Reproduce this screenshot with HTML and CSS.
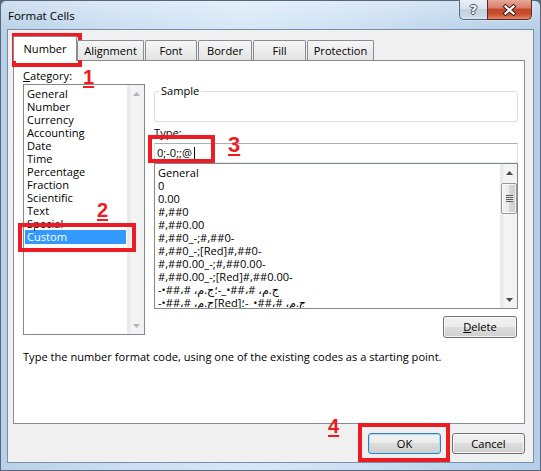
FILE: index.html
```html
<!DOCTYPE html>
<html lang="en">
<head>
<meta charset="utf-8">
<title>Format Cells</title>
<link rel="stylesheet" href="styles.css">
</head>
<body>
<div class="window">
  <div class="titlebar">
    <span class="title">Format Cells</span>
    <div class="caption">
      <div class="cbtn help"><span class="help-glyph">?</span></div>
      <div class="cbtn close">
        <svg width="15" height="12" viewBox="0 0 15 12">
          <path d="M3.5 2.5 L11.5 9.5 M11.5 2.5 L3.5 9.5" stroke="#45201a" stroke-width="4.2" stroke-linecap="square" fill="none"/>
          <path d="M3.5 2.5 L11.5 9.5 M11.5 2.5 L3.5 9.5" stroke="#ffffff" stroke-width="2.2" stroke-linecap="square" fill="none"/>
        </svg>
      </div>
    </div>
  </div>
  <div class="client">
    <div class="tabs">
      <div class="tab active">Number</div>
      <div class="tab">Alignment</div>
      <div class="tab">Font</div>
      <div class="tab">Border</div>
      <div class="tab">Fill</div>
      <div class="tab">Protection</div>
    </div>
    <div class="panel">
      <div class="cols">
        <div class="col-left">
          <div class="label"><u>C</u>ategory:</div>
          <div class="listbox cat">
            <ul class="items">
              <li>General</li>
              <li>Number</li>
              <li>Currency</li>
              <li>Accounting</li>
              <li>Date</li>
              <li>Time</li>
              <li>Percentage</li>
              <li>Fraction</li>
              <li>Scientific</li>
              <li>Text</li>
              <li>Special</li>
              <li class="sel">Custom</li>
            </ul>
            <div class="vscroll disabled">
              <div class="sb-btn"><svg width="7" height="4" viewBox="0 0 7 4"><path d="M0 4 L3.5 0 L7 4 Z"/></svg></div>
              <div class="sb-track"></div>
              <div class="sb-btn"><svg width="7" height="4" viewBox="0 0 7 4"><path d="M0 0 L7 0 L3.5 4 Z"/></svg></div>
            </div>
          </div>
        </div>
        <div class="col-right">
          <fieldset class="sample"><legend>Sample</legend></fieldset>
          <div class="label"><u>T</u>ype:</div>
          <div class="textbox">0;-0;;@<span class="caret"></span></div>
          <div class="listbox fmt">
            <ul class="items">
              <li>General</li>
              <li>0</li>
              <li>0.00</li>
              <li>#,##0</li>
              <li>#,##0.00</li>
              <li>#,##0_-;#,##0-</li>
              <li>#,##0_-;[Red]#,##0-</li>
              <li>#,##0.00_-;#,##0.00-</li>
              <li>#,##0.00_-;[Red]#,##0.00-</li>
              <li><bdo dir="ltr">-•##،# ،م.ج؛-_•##،# ،م.ج</bdo></li>
              <li><bdo dir="ltr">-•##،# ،م.ج[Red]؛-_•##،# ،م.ج</bdo></li>
            </ul>
            <div class="vscroll">
              <div class="sb-btn"><svg width="7" height="4" viewBox="0 0 7 4"><path d="M0 4 L3.5 0 L7 4 Z"/></svg></div>
              <div class="sb-track"><div class="thumb"><span class="grip"></span></div></div>
              <div class="sb-btn"><svg width="7" height="4" viewBox="0 0 7 4"><path d="M0 0 L7 0 L3.5 4 Z"/></svg></div>
            </div>
          </div>
          <div class="btn-row"><button class="btn delete"><u>D</u>elete</button></div>
        </div>
      </div>
      <p class="desc">Type the number format code, using one of the existing codes as a starting point.</p>
    </div>
    <div class="footer">
      <button class="btn default">OK</button>
      <button class="btn">Cancel</button>
    </div>
  </div>

  <div class="mark box1"></div>
  <div class="mark box2"></div>
  <div class="mark box3"></div>
  <div class="mark box4"></div>
  <span class="num n1">1</span>
  <span class="num n2">2</span>
  <span class="num n3">3</span>
  <span class="num n4">4</span>
</div>
</body>
</html>
```
FILE: styles.css
```css
* { box-sizing: border-box; }
html, body { margin: 0; padding: 0; }
html { background: #56677c; }
body {
  width: 541px;
  height: 471px;
  overflow: hidden;
  font-family: "Open Sans", "Noto Sans", "DejaVu Sans", sans-serif;
  font-size: 11.1px;
  color: #000;
}

.window {
  position: relative;
  width: 541px;
  height: 471px;
  border: 1px solid #56677c;
  border-radius: 6px 6px 0 0;
  padding: 0 6px 7px;
  display: flex;
  flex-direction: column;
  background:
    linear-gradient(to bottom, rgba(255,255,255,0.35), rgba(255,255,255,0) 30px),
    linear-gradient(to right, #b9d0e8 0%, #c9ddf1 20%, #d6e7f7 45%, #cde0f3 65%, #bcd3eb 85%, #b6cee8 100%);
}

/* title bar */
.titlebar {
  height: 28px;
  display: flex;
  align-items: flex-start;
  justify-content: space-between;
}
.title {
  margin: 7px 0 0 1px;
  font-size: 11.5px;
  line-height: 16px;
  color: #000;
}
.caption {
  display: flex;
  margin: -1px 2px 0 0;
  box-shadow: 0 0 2px rgba(255,255,255,0.8);
  border-radius: 0 0 5px 5px;
}
.cbtn {
  height: 20px;
  display: flex;
  align-items: center;
  justify-content: center;
  border: 1px solid #55667c;
  border-top: none;
}
.cbtn.help {
  width: 28px;
  border-right: none;
  border-radius: 0 0 0 5px;
  background: linear-gradient(to bottom, #e9eff6 0%, #d9e3ee 45%, #c2d1e1 50%, #cad8e7 85%, #dbe6f1 100%);
}
.help-glyph {
  font-family: "DejaVu Sans", sans-serif;
  font-weight: bold;
  font-size: 13px;
  line-height: 16px;
  color: #fff;
  text-shadow: 1px 0 0 #3d4d61, -1px 0 0 #3d4d61, 0 1px 0 #3d4d61, 0 -1px 0 #3d4d61;
}
.cbtn.close {
  width: 45px;
  border-color: #5a2a22;
  border-radius: 0 0 5px 0;
  background: linear-gradient(to bottom, #e8a797 0%, #d97f6b 40%, #c4462f 50%, #c8502f 75%, #e2876a 100%);
}
.cbtn.close svg { display: block; }

/* client area */
.client {
  flex: 1;
  background: #f0f0f0;
  border: 1px solid #7a8ea8;
  padding: 6px 8px 8px 5px;
  display: flex;
  flex-direction: column;
}

/* tabs */
.tabs {
  height: 24px;
  display: flex;
  align-items: flex-end;
  position: relative;
  z-index: 1;
}
.tab {
  height: 20px;
  line-height: 19px;
  text-align: center;
  border: 1px solid #898c95;
  border-bottom: none;
  border-radius: 2px 2px 0 0;
  background: linear-gradient(to bottom, #f6f6f6, #e4e4e4);
  margin-left: 1px;
}
.tab.active {
  height: 25px;
  line-height: 22px;
  padding-top: 1px;
  margin: 0 0 -1px 0;
  width: 64px;
  background: #fff;
}
.tab:nth-child(2) { width: 67px; margin-left: 0; }
.tab:nth-child(3) { width: 52px; margin-left: 1px; }
.tab:nth-child(4) { width: 54px; margin-left: 1px; }
.tab:nth-child(5) { width: 53px; margin-left: 1px; }
.tab:nth-child(6) { width: 67px; margin-left: 1px; }

/* panel */
.panel {
  height: 364px;
  width: 512px;
  border: 1px solid #898c95;
  background: #fff;
  padding: 7px 6px 0 9px;
}
.cols {
  display: flex;
  gap: 9px;
  align-items: flex-start;
}
.col-left { width: 122px; }
.col-right {
  width: 364px;
  display: flex;
  flex-direction: column;
  margin-top: 16px;
}
.label {
  line-height: 16px;
  height: 16px;
}
u { text-decoration: underline; text-underline-offset: 1px; }

/* list boxes */
.listbox {
  display: flex;
  border: 1px solid #828790;
  background: #fff;
}
.listbox.cat { height: 251px; }
.listbox.fmt { height: 146px; }
.items {
  list-style: none;
  margin: 0;
  padding: 2px 0 0 0;
  flex: 1;
  overflow: hidden;
}
.items li {
  line-height: 13px;
  height: 13px;
  white-space: nowrap;
}
.cat .items li { margin: 0 1px; padding-left: 2px; }
.cat .items li.sel { background: #3399ff; color: #fff; height: 14px; line-height: 14px; }
.fmt .items li { padding-left: 3px; }
bdo { font-family: "Open Sans", "DejaVu Sans", sans-serif; }

.vscroll {
  width: 17px;
  display: flex;
  flex-direction: column;
  background: linear-gradient(to right, #e6e6e6 0%, #f5f5f5 25%, #f1f1f1 100%);
  border-left: 1px solid #ececec;
}
.sb-btn {
  height: 17px;
  display: flex;
  align-items: center;
  justify-content: center;
}
.sb-btn svg { display: block; fill: #4a4a4a; }
.vscroll.disabled .sb-btn svg { fill: #b4b4b4; }
.sb-track { flex: 1; padding-top: 2px; }
.thumb {
  height: 31px;
  width: 16px;
  border: 1px solid #979797;
  border-radius: 2px;
  background: linear-gradient(to right, #f4f4f4 0%, #e9e9e9 50%, #d8d8d8 51%, #cdcdcd 100%);
  box-shadow: inset 0 0 0 1px rgba(255,255,255,0.7);
  display: flex;
  align-items: center;
  justify-content: center;
}
.grip {
  width: 7px;
  height: 7px;
  background: repeating-linear-gradient(to bottom, #5a5a5a 0, #5a5a5a 1px, #e8e8e8 1px, #e8e8e8 2px);
}

/* sample group */
.sample {
  margin: 0;
  padding: 0;
  height: 38px;
  border: 1px solid #d5dfe5;
  border-radius: 3px;
}
.sample legend {
  margin-left: 4px;
  padding: 0 2px;
  line-height: 14px;
}
.col-right .label { margin-top: 3px; }

.textbox {
  margin-top: 2px;
  height: 20px;
  border: 1px solid #abadb3;
  border-color: #abadb3 #dbdfe6 #e3e9ef #e2e3ea;
  padding-left: 2px;
  line-height: 18px;
  display: flex;
  align-items: center;
}
.caret {
  display: inline-block;
  width: 1px;
  height: 13px;
  background: #000;
  margin-left: 2px;
}

.btn-row {
  margin-top: 7px;
  display: flex;
  justify-content: flex-end;
  padding-right: 1px;
}
.btn {
  font-family: inherit;
  font-size: 11.1px;
  color: #000;
  width: 73px;
  height: 21px;
  padding: 0;
  border: 1px solid #707070;
  border-radius: 3px;
  background: linear-gradient(to bottom, #f2f2f2 0%, #ebebeb 49%, #dddddd 50%, #cfcfcf 100%);
  box-shadow: inset 0 0 0 1px rgba(255,255,255,0.75);
  line-height: 18px;
}
.btn.delete { width: 74px; height: 22px; }
.btn.default {
  border-color: #3c7fb1;
  box-shadow: inset 0 0 0 1px #a8dcf5;
}

.desc {
  margin: 11px 0 0 0;
  line-height: 16px;
}

.footer {
  margin-top: 9px;
  display: flex;
  justify-content: flex-end;
  gap: 11px;
}

/* annotations */
.mark {
  position: absolute;
  border: 4px solid #ed1c24;
}
.box1 { left: 11px; top: 32px; width: 70px; height: 34px; }
.box2 { left: 17px; top: 222px; width: 118px; height: 29px; }
.box3 { left: 147px; top: 134px; width: 67px; height: 28px; }
.box4 { left: 357px; top: 422px; width: 92px; height: 39px; }

.num {
  position: absolute;
  font-family: "Liberation Sans", Arial, sans-serif;
  font-weight: bold;
  font-size: 20px;
  line-height: 20px;
  color: #ed1c24;
  text-decoration: underline;
  text-decoration-thickness: 2px;
  text-underline-offset: 2px;
}
.n1 { left: 82px; top: 66px; }
.n2 { left: 96px; top: 199px; }
.n3 { left: 227px; top: 133px; font-size: 22px; line-height: 22px; }
.n4 { left: 327px; top: 415px; }
```
